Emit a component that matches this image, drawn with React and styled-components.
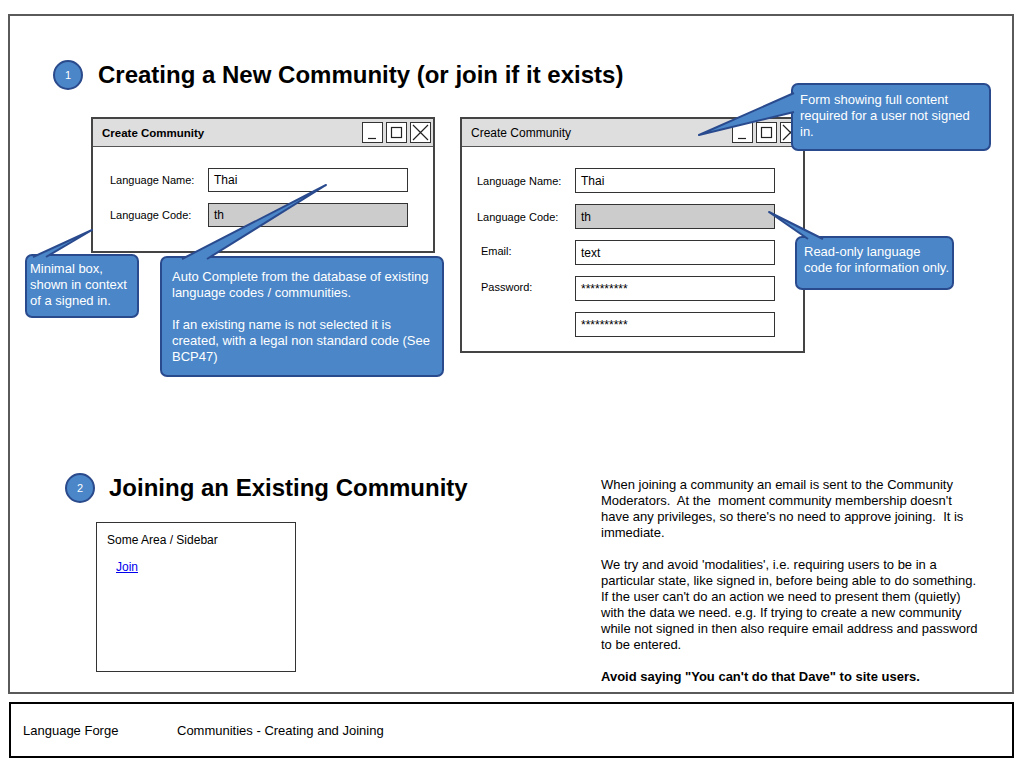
import React from "react";
import styled, { createGlobalStyle } from "styled-components";

const GlobalStyle = createGlobalStyle`
  html, body {
    margin: 0;
    padding: 0;
    background: #fff;
  }
  body {
    font-family: "Liberation Sans", Arial, sans-serif;
    color: #000;
  }
`;

const Root = styled.div`
  position: relative;
  width: 1024px;
  height: 768px;
  padding: 14px 0 0 8px;
  box-sizing: border-box;
  overflow: hidden;
`;

const Frame = styled.div`
  width: 1006px;
  height: 680px;
  border: 2px solid #5a5a5a;
  box-sizing: border-box;
  display: flex;
  flex-direction: column;
`;

const Header = styled.div`
  display: flex;
  align-items: center;
  gap: ${(p) => p.gap}px;
  height: 30px;
  margin: ${(p) => p.margin};
`;

const Badge = styled.div`
  width: 30px;
  height: 30px;
  border-radius: 50%;
  background: #4a86c8;
  border: 2px solid #2a4a8c;
  box-sizing: border-box;
  color: #fff;
  font-size: 11px;
  display: flex;
  align-items: center;
  justify-content: center;
`;

const Title = styled.h1`
  margin: 0;
  font-size: 24px;
  font-weight: bold;
  line-height: 30px;
`;

const DialogRow = styled.div`
  display: flex;
  align-items: flex-start;
  gap: 25px;
  margin: 27px 0 0 81px;
`;

const Dialog = styled.div`
  width: ${(p) => p.w}px;
  height: ${(p) => p.h}px;
  border: 2px solid #444;
  box-sizing: border-box;
  background: #fff;
`;

const TitleBar = styled.div`
  height: 28px;
  box-sizing: border-box;
  background: #dedede;
  border-bottom: 1px solid #555;
  display: flex;
  align-items: center;
  justify-content: space-between;
  padding: 0 2px 0 9px;
  font-size: ${(p) => (p.bold ? 11.5 : 12)}px;
  font-weight: ${(p) => (p.bold ? "bold" : "normal")};
`;

const WinButtons = styled.div`
  display: flex;
  gap: 3px;
`;

const WinButton = styled.div`
  width: 21px;
  height: 21px;
  border: 1px solid #333;
  box-sizing: border-box;
  background: #fff;
  display: flex;
  svg {
    display: block;
  }
`;

const FormGrid = styled.div`
  display: grid;
  grid-template-columns: 98px 200px;
  grid-auto-rows: ${(p) => p.rowH}px;
  row-gap: 11px;
  align-items: center;
  padding: 21px 0 0 ${(p) => p.left}px;
  font-size: 11px;
`;

const Label = styled.span`
  padding-left: ${(p) => p.indent || 0}px;
  margin-top: ${(p) => (p.indent ? -4 : 0)}px;
`;

const Input = styled.div`
  height: 100%;
  border: 1px solid #333;
  box-sizing: border-box;
  background: ${(p) => (p.readOnly ? "#cccccc" : "#fff")};
  padding-left: 5px;
  display: flex;
  align-items: center;
  font-size: 12px;
`;

const Section2 = styled.div`
  display: flex;
  margin-top: 120px;
`;

const LeftCol = styled.div`
  width: 591px;
  flex-shrink: 0;
`;

const Sidebar = styled.div`
  width: 200px;
  height: 150px;
  margin: 19px 0 0 86px;
  border: 1.5px solid #333;
  box-sizing: border-box;
  padding: 10px 0 0 10px;
  font-size: 12px;
`;

const JoinLink = styled.a`
  display: inline-block;
  margin: 13px 0 0 9px;
  color: #0000ee;
  text-decoration: underline;
  font-size: 12px;
`;

const TextCol = styled.div`
  padding-top: 4px;
  font-size: 13px;
  line-height: 16px;
`;

const Para = styled.p`
  margin: 0 0 16px;
  white-space: pre;
  font-weight: ${(p) => (p.bold ? "bold" : "normal")};
`;

const Footer = styled.div`
  width: 1005px;
  height: 56px;
  margin: 8px 0 0 1px;
  border: 2px solid #000;
  box-sizing: border-box;
  display: flex;
  align-items: center;
  padding-left: 12px;
  font-size: 13px;
`;

const FooterItem = styled.span`
  width: ${(p) => p.w}px;
`;

const Callout = styled.div`
  position: absolute;
  left: ${(p) => p.x}px;
  top: ${(p) => p.y}px;
  width: ${(p) => p.w}px;
  height: ${(p) => p.h}px;
  box-sizing: border-box;
  background: #4a86c8;
  border: 2px solid #2a4a8e;
  border-radius: 7px;
  color: #fff;
  font-size: 13px;
  line-height: 16px;
  padding: ${(p) => p.pad};
  white-space: pre;
  z-index: 2;
`;

const Tails = styled.svg`
  position: absolute;
  left: 0;
  top: 0;
  pointer-events: none;
  z-index: 3;
`;

const tails = [
  { tip: [92, 230], a: [33, 257], b: [46, 257] },
  { tip: [326, 185], a: [182, 259], b: [207, 259] },
  { tip: [699, 135], a: [794, 93], b: [794, 112] },
  { tip: [769, 212], a: [808, 239], b: [823, 239] },
];

function WindowControls() {
  return (
    <WinButtons>
      <WinButton>
        <svg width="19" height="19" viewBox="0 0 19 19">
          <path d="M5 15.5H13" stroke="#222" strokeWidth="1.2" />
        </svg>
      </WinButton>
      <WinButton>
        <svg width="19" height="19" viewBox="0 0 19 19">
          <rect x="4.5" y="4.5" width="10" height="10" fill="none" stroke="#222" strokeWidth="1.2" />
        </svg>
      </WinButton>
      <WinButton>
        <svg width="19" height="19" viewBox="0 0 19 19">
          <path d="M2 2L17 17M17 2L2 17" stroke="#222" strokeWidth="1.2" />
        </svg>
      </WinButton>
    </WinButtons>
  );
}

export default function App() {
  return (
    <>
      <GlobalStyle />
      <Root>
        <Frame>
          <Header gap={15} margin="44px 0 0 43px">
            <Badge>1</Badge>
            <Title>Creating a New Community (or join if it exists)</Title>
          </Header>

          <DialogRow>
            <Dialog w={344} h={136}>
              <TitleBar bold>
                <span>Create Community</span>
                <WindowControls />
              </TitleBar>
              <FormGrid left={17} rowH={24}>
                <Label>Language Name:</Label>
                <Input>Thai</Input>
                <Label>Language Code:</Label>
                <Input readOnly>th</Input>
              </FormGrid>
            </Dialog>

            <Dialog w={345} h={236}>
              <TitleBar>
                <span>Create Community</span>
                <WindowControls />
              </TitleBar>
              <FormGrid left={15} rowH={25}>
                <Label>Language Name:</Label>
                <Input>Thai</Input>
                <Label>Language Code:</Label>
                <Input readOnly>th</Input>
                <Label indent={4}>Email:</Label>
                <Input>text</Input>
                <Label indent={4}>Password:</Label>
                <Input>**********</Input>
                <span />
                <Input>**********</Input>
              </FormGrid>
            </Dialog>
          </DialogRow>

          <Section2>
            <LeftCol>
              <Header gap={14} margin="0 0 0 55px">
                <Badge>2</Badge>
                <Title>Joining an Existing Community</Title>
              </Header>
              <Sidebar>
                Some Area / Sidebar
                <br />
                <JoinLink href="#">Join</JoinLink>
              </Sidebar>
            </LeftCol>
            <TextCol>
              <Para>
                {"When joining a community an email is sent to the Community\nModerators.  At the  moment community membership doesn't\nhave any privileges, so there's no need to approve joining.  It is\nimmediate."}
              </Para>
              <Para>
                {"We try and avoid 'modalities', i.e. requiring users to be in a\nparticular state, like signed in, before being able to do something.\nIf the user can't do an action we need to present them (quietly)\nwith the data we need. e.g. If trying to create a new community\nwhile not signed in then also require email address and password\nto be entered."}
              </Para>
              <Para bold>Avoid saying "You can't do that Dave" to site users.</Para>
            </TextCol>
          </Section2>
        </Frame>

        <Footer>
          <FooterItem w={154}>Language Forge</FooterItem>
          <FooterItem>Communities - Creating and Joining</FooterItem>
        </Footer>

        <Callout x={25} y={254} w={114} h={64} pad="5px 3px">
          {"Minimal box,\nshown in context\nof a signed in."}
        </Callout>
        <Callout x={160} y={256} w={284} h={121} pad="11px 10px">
          {"Auto Complete from the database of existing\nlanguage codes / communities.\n\nIf an existing name is not selected it is\ncreated, with a legal non standard code (See\nBCP47)"}
        </Callout>
        <Callout x={791} y={83} w={200} h={68} pad="7px 7px">
          {"Form showing full content\nrequired for a user not signed\nin."}
        </Callout>
        <Callout x={795} y={236} w={159} h={54} pad="6px 7px">
          {"Read-only language\ncode for information only."}
        </Callout>

        <Tails width="1024" height="768" viewBox="0 0 1024 768">
          {tails.map((t, i) => (
            <g key={i}>
              <polygon
                points={`${t.tip.join(",")} ${t.a.join(",")} ${t.b.join(",")}`}
                fill="#4a86c8"
              />
              <path
                d={`M${t.a.join(" ")}L${t.tip.join(" ")}L${t.b.join(" ")}`}
                fill="none"
                stroke="#2a4a8e"
                strokeWidth="2"
                strokeLinejoin="round"
              />
            </g>
          ))}
        </Tails>
      </Root>
    </>
  );
}
